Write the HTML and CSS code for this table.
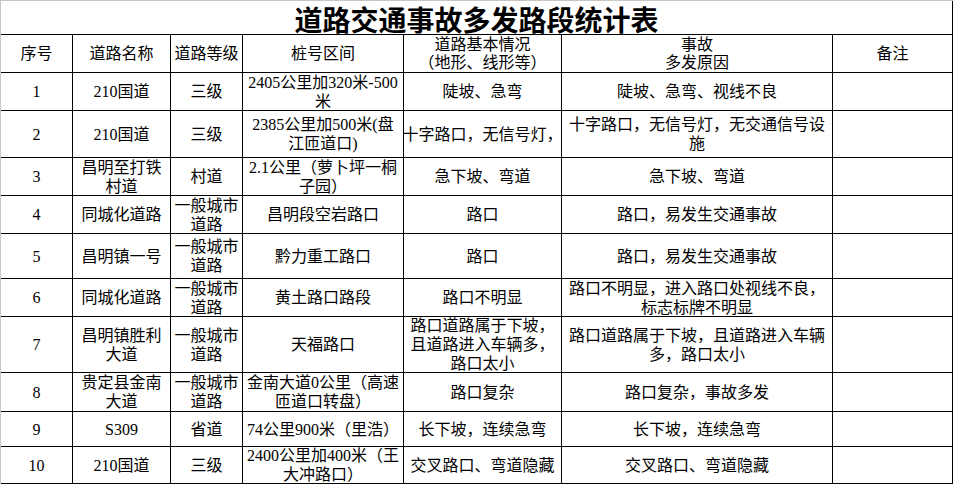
FILE: index.html
```html
<!DOCTYPE html>
<html lang="zh-CN">
<head>
<meta charset="utf-8">
<title>道路交通事故多发路段统计表</title>
<link rel="stylesheet" href="styles.css">
</head>
<body>
<div class="sheet">
  <div class="c title">道路交通事故多发路段统计表</div>

  <div class="c">序号</div>
  <div class="c">道路名称</div>
  <div class="c">道路等级</div>
  <div class="c">桩号区间</div>
  <div class="c tight"><span>道路基本情况<br>（地形、线形等）</span></div>
  <div class="c tight"><span>事故<br>多发原因</span></div>
  <div class="c">备注</div>

  <div class="c">1</div>
  <div class="c">210国道</div>
  <div class="c">三级</div>
  <div class="c"><span>2405公里加320米-500<br>米</span></div>
  <div class="c">陡坡、急弯</div>
  <div class="c">陡坡、急弯、视线不良</div>
  <div class="c"></div>

  <div class="c">2</div>
  <div class="c">210国道</div>
  <div class="c">三级</div>
  <div class="c"><span>2385公里加500米(盘<br>江匝道口)</span></div>
  <div class="c">十字路口，无信号灯，</div>
  <div class="c"><span>十字路口，无信号灯，无交通信号设<br>施</span></div>
  <div class="c"></div>

  <div class="c">3</div>
  <div class="c"><span>昌明至打铁<br>村道</span></div>
  <div class="c">村道</div>
  <div class="c"><span>2.1公里（萝卜坪一桐<br>子园）</span></div>
  <div class="c">急下坡、弯道</div>
  <div class="c">急下坡、弯道</div>
  <div class="c"></div>

  <div class="c">4</div>
  <div class="c">同城化道路</div>
  <div class="c"><span>一般城市<br>道路</span></div>
  <div class="c">昌明段空岩路口</div>
  <div class="c">路口</div>
  <div class="c">路口，易发生交通事故</div>
  <div class="c"></div>

  <div class="c">5</div>
  <div class="c">昌明镇一号</div>
  <div class="c"><span>一般城市<br>道路</span></div>
  <div class="c">黔力重工路口</div>
  <div class="c">路口</div>
  <div class="c">路口，易发生交通事故</div>
  <div class="c"></div>

  <div class="c">6</div>
  <div class="c">同城化道路</div>
  <div class="c"><span>一般城市<br>道路</span></div>
  <div class="c">黄土路口路段</div>
  <div class="c">路口不明显</div>
  <div class="c"><span>路口不明显，进入路口处视线不良，<br>标志标牌不明显</span></div>
  <div class="c"></div>

  <div class="c">7</div>
  <div class="c"><span>昌明镇胜利<br>大道</span></div>
  <div class="c"><span>一般城市<br>道路</span></div>
  <div class="c">天福路口</div>
  <div class="c"><span>路口道路属于下坡，<br>且道路进入车辆多，<br>路口太小</span></div>
  <div class="c"><span>路口道路属于下坡，且道路进入车辆<br>多，路口太小</span></div>
  <div class="c"></div>

  <div class="c">8</div>
  <div class="c"><span>贵定县金南<br>大道</span></div>
  <div class="c"><span>一般城市<br>道路</span></div>
  <div class="c"><span>金南大道0公里（高速<br>匝道口转盘）</span></div>
  <div class="c">路口复杂</div>
  <div class="c">路口复杂，事故多发</div>
  <div class="c"></div>

  <div class="c">9</div>
  <div class="c">S309</div>
  <div class="c">省道</div>
  <div class="c">74公里900米（里浩）</div>
  <div class="c">长下坡，连续急弯</div>
  <div class="c">长下坡，连续急弯</div>
  <div class="c"></div>

  <div class="c">10</div>
  <div class="c">210国道</div>
  <div class="c">三级</div>
  <div class="c"><span>2400公里加400米（王<br>大冲路口）</span></div>
  <div class="c">交叉路口、弯道隐藏</div>
  <div class="c">交叉路口、弯道隐藏</div>
  <div class="c"></div>
</div>
</body>
</html>
```

FILE: styles.css
```css
html, body {
  margin: 0;
  padding: 0;
  background: #ffffff;
}

.sheet {
  display: grid;
  grid-template-columns: 72px 98px 72px 161px 158px 271px 120px;
  grid-template-rows: 34px 38px 38px 47px 38px 38px 45px 38px 56px 39px 35px 37px;
  width: 953px;
  box-sizing: border-box;
  border-top: 1px solid #c6c6c6;
  border-left: 1px solid #c6c6c6;
  font-family: "Liberation Serif", "Noto Sans CJK SC", serif;
  font-size: 16px;
  line-height: 19px;
  color: #000000;
}

.c {
  border-right: 1px solid #000000;
  border-bottom: 1px solid #000000;
  display: flex;
  align-items: center;
  justify-content: center;
  text-align: center;
  white-space: nowrap;
  overflow: hidden;
}

.tight {
  line-height: 18px;
}

.title {
  grid-column: 1 / -1;
  font-family: "Noto Sans CJK SC", sans-serif;
  font-weight: 700;
  font-size: 28px;
  line-height: 30px;
  padding-top: 2px;
  box-sizing: border-box;
  overflow: visible;
}
```
